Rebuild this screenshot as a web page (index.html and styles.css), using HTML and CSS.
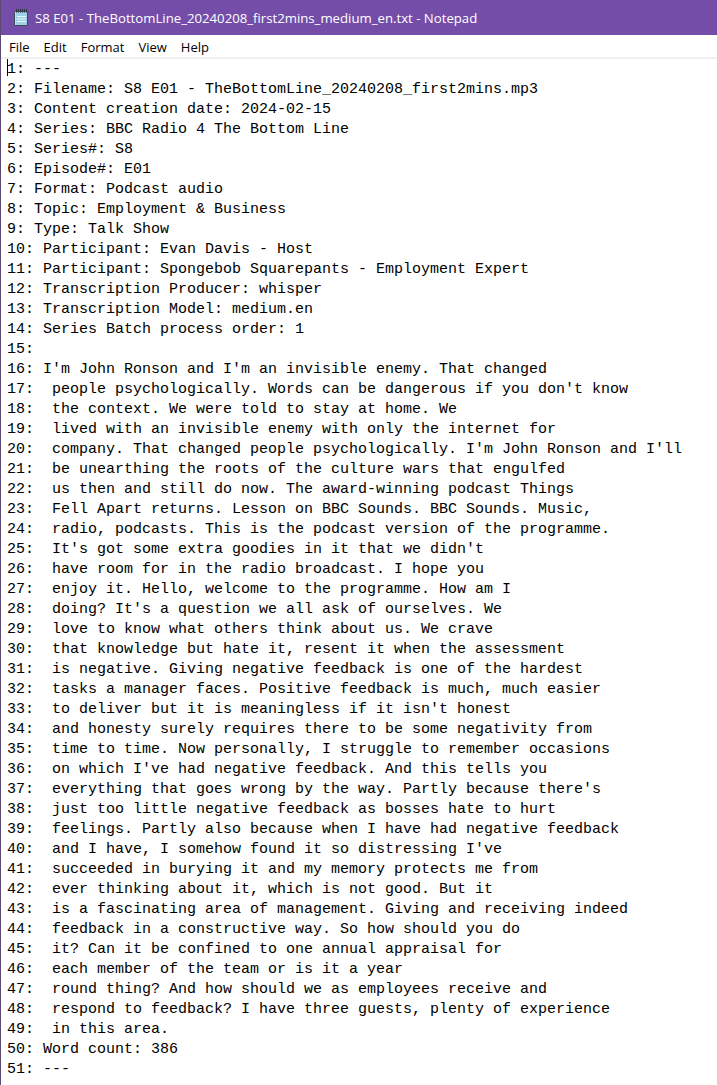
FILE: index.html
```html
<!DOCTYPE html>
<html lang="en">
<head>
<meta charset="utf-8">
<title>Notepad</title>
<link rel="stylesheet" href="styles.css">
</head>
<body>
<div class="window">
  <header class="titlebar">
    <svg class="app-icon" width="18" height="19" viewBox="0 0 18 19">
      <path d="M3.5 3.5 H15.5 V17.5 H2.5 V4.5 Z" fill="#bfe3f2" stroke="#3a4a5a" stroke-width="1"/>
      <path d="M3.5 17.5 L2.5 16.5 V4.5" fill="none" stroke="#3a4a5a" stroke-width="1"/>
      <rect x="4" y="4" width="11" height="13" fill="#9fd0e6"/>
      <path d="M5 8.5 H14 M5 11 H14 M5 13.5 H14" stroke="#e8f6fc" stroke-width="1"/>
      <path d="M4.5 1 V4.5 M6.5 1 V4.5 M8.5 1 V4.5 M10.5 1 V4.5 M12.5 1 V4.5 M14.5 1 V4.5" stroke="#2d3540" stroke-width="1"/>
    </svg>
    <span class="title">S8 E01 - TheBottomLine_20240208_first2mins_medium_en.txt - Notepad</span>
  </header>
  <nav class="menubar">
    <span class="menu-item">File</span>
    <span class="menu-item">Edit</span>
    <span class="menu-item">Format</span>
    <span class="menu-item">View</span>
    <span class="menu-item">Help</span>
  </nav>
  <main class="editor">
<pre class="text"><span class="caret"></span>1: ---
2: Filename: S8 E01 - TheBottomLine_20240208_first2mins.mp3
3: Content creation date: 2024-02-15
4: Series: BBC Radio 4 The Bottom Line
5: Series#: S8
6: Episode#: E01
7: Format: Podcast audio
8: Topic: Employment &amp; Business
9: Type: Talk Show
10: Participant: Evan Davis - Host
11: Participant: Spongebob Squarepants - Employment Expert
12: Transcription Producer: whisper
13: Transcription Model: medium.en
14: Series Batch process order: 1
15: 
16: I'm John Ronson and I'm an invisible enemy. That changed
17:  people psychologically. Words can be dangerous if you don't know
18:  the context. We were told to stay at home. We
19:  lived with an invisible enemy with only the internet for
20:  company. That changed people psychologically. I'm John Ronson and I'll
21:  be unearthing the roots of the culture wars that engulfed
22:  us then and still do now. The award-winning podcast Things
23:  Fell Apart returns. Lesson on BBC Sounds. BBC Sounds. Music,
24:  radio, podcasts. This is the podcast version of the programme.
25:  It's got some extra goodies in it that we didn't
26:  have room for in the radio broadcast. I hope you
27:  enjoy it. Hello, welcome to the programme. How am I
28:  doing? It's a question we all ask of ourselves. We
29:  love to know what others think about us. We crave
30:  that knowledge but hate it, resent it when the assessment
31:  is negative. Giving negative feedback is one of the hardest
32:  tasks a manager faces. Positive feedback is much, much easier
33:  to deliver but it is meaningless if it isn't honest
34:  and honesty surely requires there to be some negativity from
35:  time to time. Now personally, I struggle to remember occasions
36:  on which I've had negative feedback. And this tells you
37:  everything that goes wrong by the way. Partly because there's
38:  just too little negative feedback as bosses hate to hurt
39:  feelings. Partly also because when I have had negative feedback
40:  and I have, I somehow found it so distressing I've
41:  succeeded in burying it and my memory protects me from
42:  ever thinking about it, which is not good. But it
43:  is a fascinating area of management. Giving and receiving indeed
44:  feedback in a constructive way. So how should you do
45:  it? Can it be confined to one annual appraisal for
46:  each member of the team or is it a year
47:  round thing? And how should we as employees receive and
48:  respond to feedback? I have three guests, plenty of experience
49:  in this area.
50: Word count: 386
51: ---</pre>
  </main>
</div>
</body>
</html>
```
FILE: styles.css
```css
html, body {
  margin: 0;
  padding: 0;
  background: #ffffff;
}

.window {
  width: 717px;
  height: 1085px;
  box-sizing: border-box;
  border-left: 1px solid #5d4a72;
  display: flex;
  flex-direction: column;
  overflow: hidden;
  background: #ffffff;
}

.titlebar {
  height: 35px;
  flex: 0 0 35px;
  background: #744da9;
  display: flex;
  align-items: center;
  padding-left: 11px;
  box-sizing: border-box;
}

.app-icon {
  display: block;
  margin-right: 5px;
  margin-top: -1px;
}

.title {
  font-family: "Open Sans", "Liberation Sans", sans-serif;
  font-size: 13.2px;
  color: #ffffff;
  white-space: nowrap;
}

.menubar {
  height: 21px;
  flex: 0 0 21px;
  display: flex;
  align-items: center;
  padding-left: 1px;
  padding-top: 1px;
  box-sizing: content-box;
  margin-bottom: 0;
  border-bottom: 2px solid #f0f0f0;
  font-family: "Open Sans", "Liberation Sans", sans-serif;
  font-size: 13px;
  color: #000000;
}

.menu-item {
  padding: 0 7px;
}

.editor {
  flex: 1;
  padding: 0 0 0 6px;
}

.text {
  margin: 0;
  font-family: "Liberation Mono", "DejaVu Sans Mono", monospace;
  font-size: 15px;
  line-height: 20px;
  color: #000000;
  white-space: pre;
}

.caret {
  display: inline-block;
  width: 0;
  height: 17px;
  border-left: 1px solid #000000;
  margin-right: -1px;
  vertical-align: -3px;
}
```
